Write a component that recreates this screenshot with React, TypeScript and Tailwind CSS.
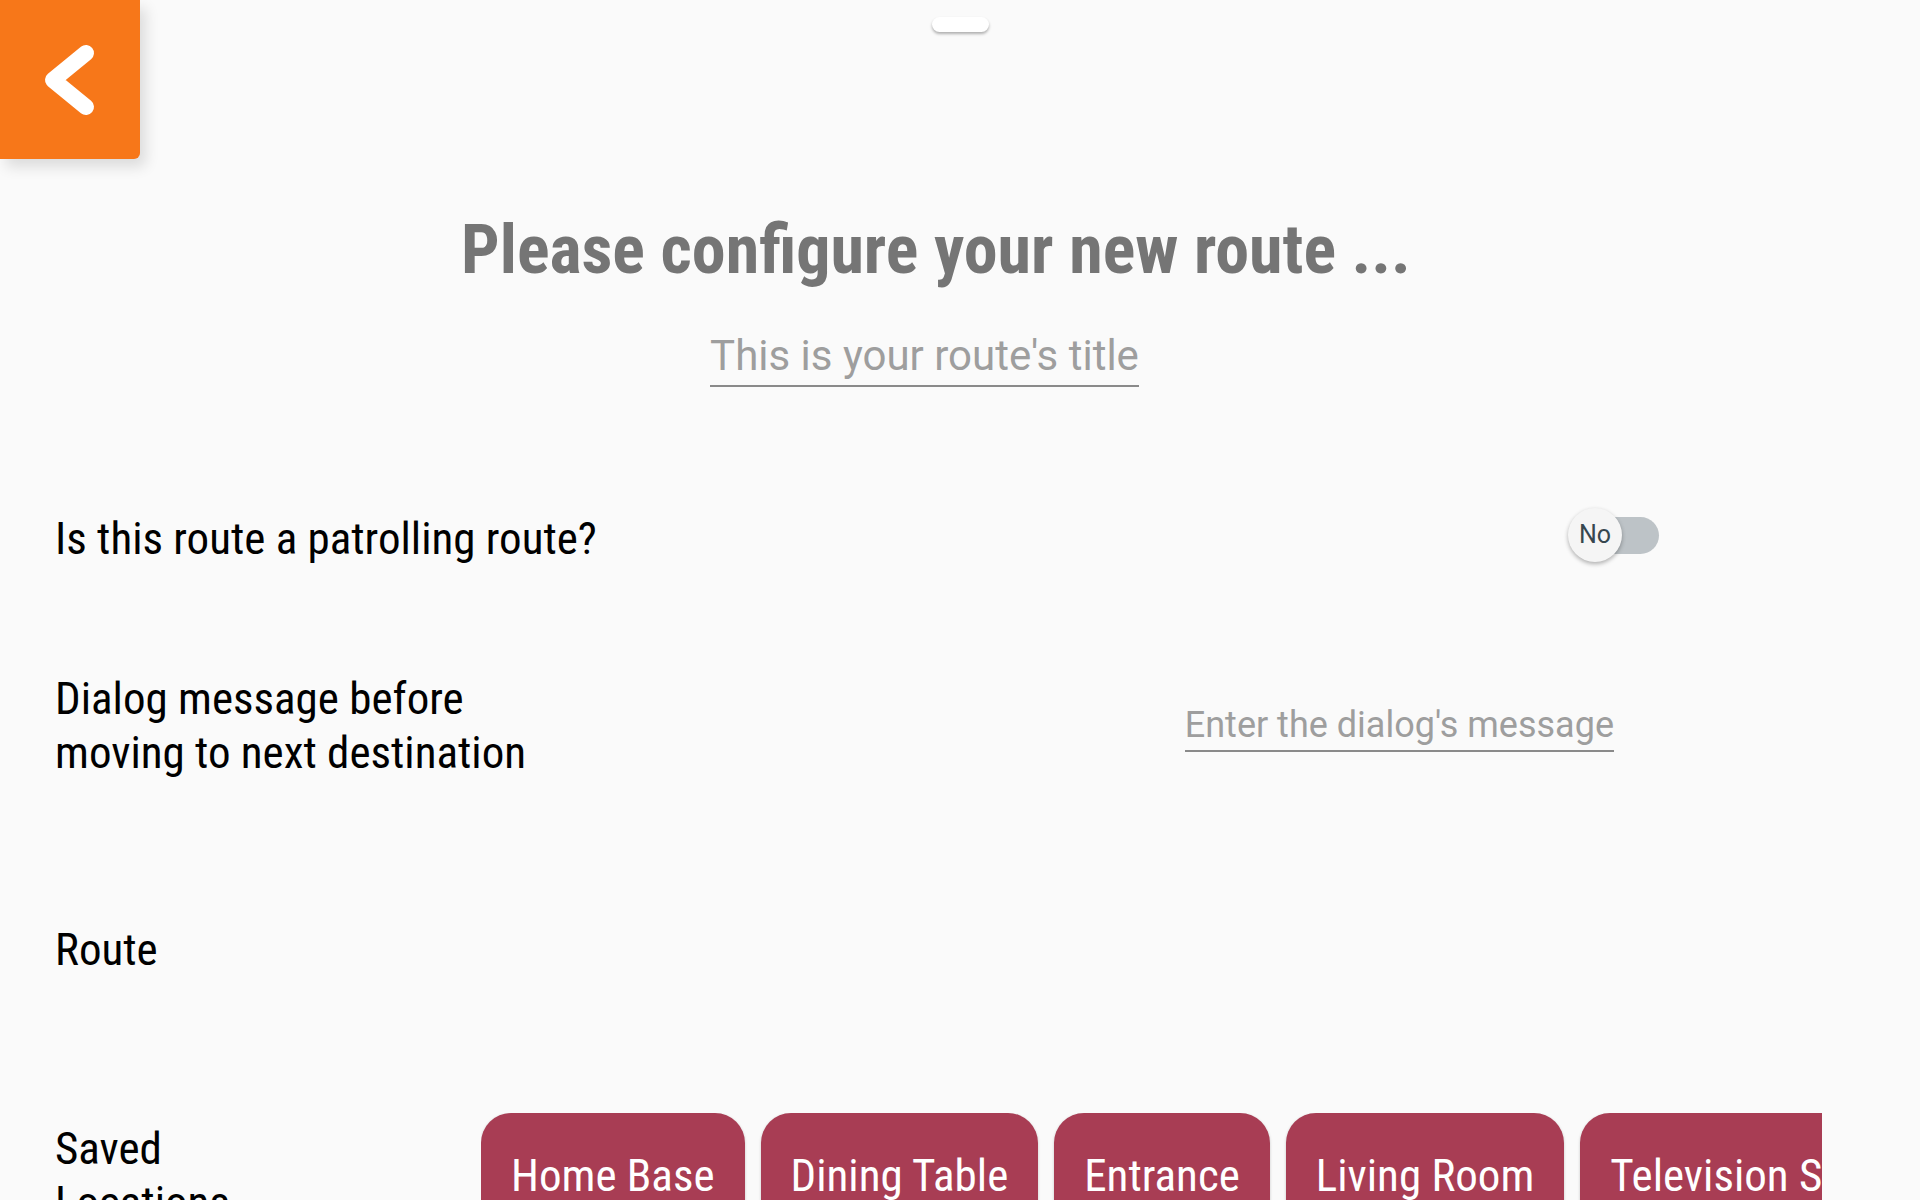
import React from 'react';

const locations = ['Home Base', 'Dining Table', 'Entrance', 'Living Room', 'Television Stand', 'Kitchen'];

function PatrolToggle() {
  return (
    <div className="relative -mt-1 h-[54px] w-[91px]">
      <div className="absolute right-0 top-[9px] h-[37px] w-[80px] rounded-full bg-[#bdc3c7]" />
      <div className="absolute left-0 top-0 flex h-[54px] w-[54px] items-center justify-center rounded-full bg-[#f5f5f5] font-['Roboto',sans-serif] text-[25px] text-[#37474f] shadow-[0_2px_4px_rgba(0,0,0,0.3)]">
        No
      </div>
    </div>
  );
}

export default function App() {
  return (
    <div className="relative h-[1200px] w-full overflow-hidden bg-[#fafafa] font-['Roboto_Condensed','Roboto',sans-serif] text-black">
      {/* drag handle */}
      <div className="absolute left-[932px] top-[17px] h-[15px] w-[57px] rounded-full bg-white shadow-[0_2px_3px_rgba(0,0,0,0.3)]" />

      {/* back button */}
      <div className="h-[159px]">
        <button className="h-[159px] w-[140px] rounded-br-md bg-[#f77719] shadow-[6px_8px_14px_rgba(0,0,0,0.12)]">
          <svg viewBox="0 0 140 159" className="h-full w-full">
            <polyline
              points="86,53 53,80 86,107"
              fill="none"
              stroke="white"
              strokeWidth="16"
              strokeLinecap="round"
              strokeLinejoin="round"
            />
          </svg>
        </button>
      </div>

      {/* Title */}
      <div className="w-[1872px]">
        <h1 className="mt-[57px] text-center text-[68px] font-bold leading-none text-[#757575]">
          Please configure your new route ...
        </h1>
      </div>
      <div className="mt-[49px] flex w-[1849px] justify-center">
        <span className="border-b-2 border-[#8a8a8a] pb-[7px] font-['Roboto',sans-serif] text-[42px] leading-[45px] text-[#9e9e9e]">
          This is your route's title
        </span>
      </div>

      {/* Patrolling */}
      <div className="mt-[125px] flex items-start justify-between pl-[55px] pr-[261px]">
        <span className="text-[45px] leading-[54px]">Is this route a patrolling route?</span>
        <PatrolToggle />
      </div>

      {/* Dialog message */}
      <div className="mt-[106px] flex items-start justify-between pl-[55px] pr-[306px]">
        <span className="w-[490px] text-[45px] leading-[54px]">Dialog message before moving to next destination</span>
        <span className="mt-[35px] border-b-2 border-[#8a8a8a] pb-[7px] font-['Roboto',sans-serif] text-[36px] leading-none text-[#9e9e9e]">
          Enter the dialog's message
        </span>
      </div>

      {/* Route */}
      <div className="mt-[143px] pl-[55px]">
        <span className="text-[45px] leading-[54px]">Route</span>
      </div>

      {/* Saved locations */}
      <div className="mt-[136px] flex items-start pl-[55px]">
        <span className="mt-[9px] w-[230px] shrink-0 text-[45px] leading-[54px]">Saved Locations</span>
        <div className="ml-[196px] flex w-[1341px] shrink-0 gap-4 overflow-hidden pb-2 pr-2">
          {locations.map((loc) => (
            <div
              key={loc}
              className="shrink-0 whitespace-nowrap rounded-[30px] bg-[#a83d54] px-[30px] pb-[36px] pt-[36px] text-[45px] leading-[54px] text-white shadow-[0_1px_3px_rgba(0,0,0,0.2)]"
            >
              {loc}
            </div>
          ))}
        </div>
      </div>
    </div>
  );
}
